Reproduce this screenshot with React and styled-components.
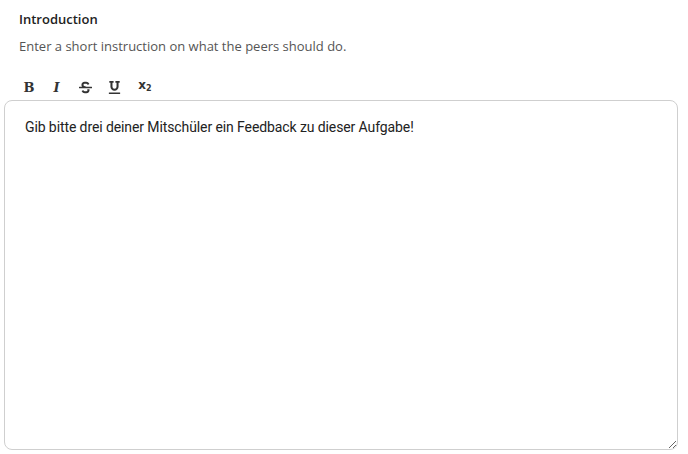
import React from "react";
import styled, { createGlobalStyle } from "styled-components";
import { FaStrikethrough, FaUnderline } from "react-icons/fa";

const GlobalStyle = createGlobalStyle`
  body {
    margin: 0;
    background: #fff;
    font-family: "Open Sans", "Noto Sans", sans-serif;
  }
`;

const Wrapper = styled.div`
  padding: 10px 10px 0 4px;
`;

const Label = styled.div`
  padding-left: 15px;
  font-size: 13px;
  font-weight: 600;
  color: #222;
  line-height: 18px;
`;

const Hint = styled.div`
  padding-left: 15px;
  margin-top: 9px;
  font-size: 13px;
  color: #555;
  line-height: 18px;
`;

const Toolbar = styled.div`
  display: flex;
  align-items: center;
  padding-left: 11px;
  margin-top: 20px;
  height: 24px;
`;

const ToolButton = styled.button`
  display: flex;
  align-items: center;
  justify-content: center;
  width: ${({ $w }) => $w}px;
  height: 24px;
  padding: 0;
  border: none;
  background: none;
  color: #333;
  cursor: pointer;
`;

const Glyph = styled.span`
  font-family: "DejaVu Serif", serif;
  font-weight: 700;
  font-style: ${({ $italic }) => ($italic ? "italic" : "normal")};
  font-size: 13px;
  line-height: 13px;
  color: #333;
`;

const SubIcon = styled.span`
  font-family: "DejaVu Sans", sans-serif;
  font-weight: 700;
  font-size: 12px;
  line-height: 12px;
  color: #333;

  small {
    font-size: 8px;
    vertical-align: -2px;
  }
`;

const Editor = styled.textarea`
  display: block;
  box-sizing: border-box;
  width: 674px;
  height: 350px;
  margin-top: 1px;
  padding: 16px 20px;
  border: 1px solid #cfcfcf;
  border-radius: 8px;
  font-family: Roboto, "Liberation Sans", sans-serif;
  font-size: 14px;
  letter-spacing: -0.1px;
  line-height: 20px;
  color: #222;
  outline: none;
  resize: both;
`;

export default function App() {
  return (
    <>
      <GlobalStyle />
      <Wrapper>
        <Label>Introduction</Label>
        <Hint>Enter a short instruction on what the peers should do.</Hint>
        <Toolbar>
          <ToolButton $w={28}><Glyph>B</Glyph></ToolButton>
          <ToolButton $w={27}><Glyph $italic>I</Glyph></ToolButton>
          <ToolButton $w={31}><FaStrikethrough size={13} /></ToolButton>
          <ToolButton $w={27}><FaUnderline size={13} /></ToolButton>
          <ToolButton $w={34}>
            <SubIcon>x<small>2</small></SubIcon>
          </ToolButton>
        </Toolbar>
        <Editor defaultValue="Gib bitte drei deiner Mitschüler ein Feedback zu dieser Aufgabe!" />
      </Wrapper>
    </>
  );
}
